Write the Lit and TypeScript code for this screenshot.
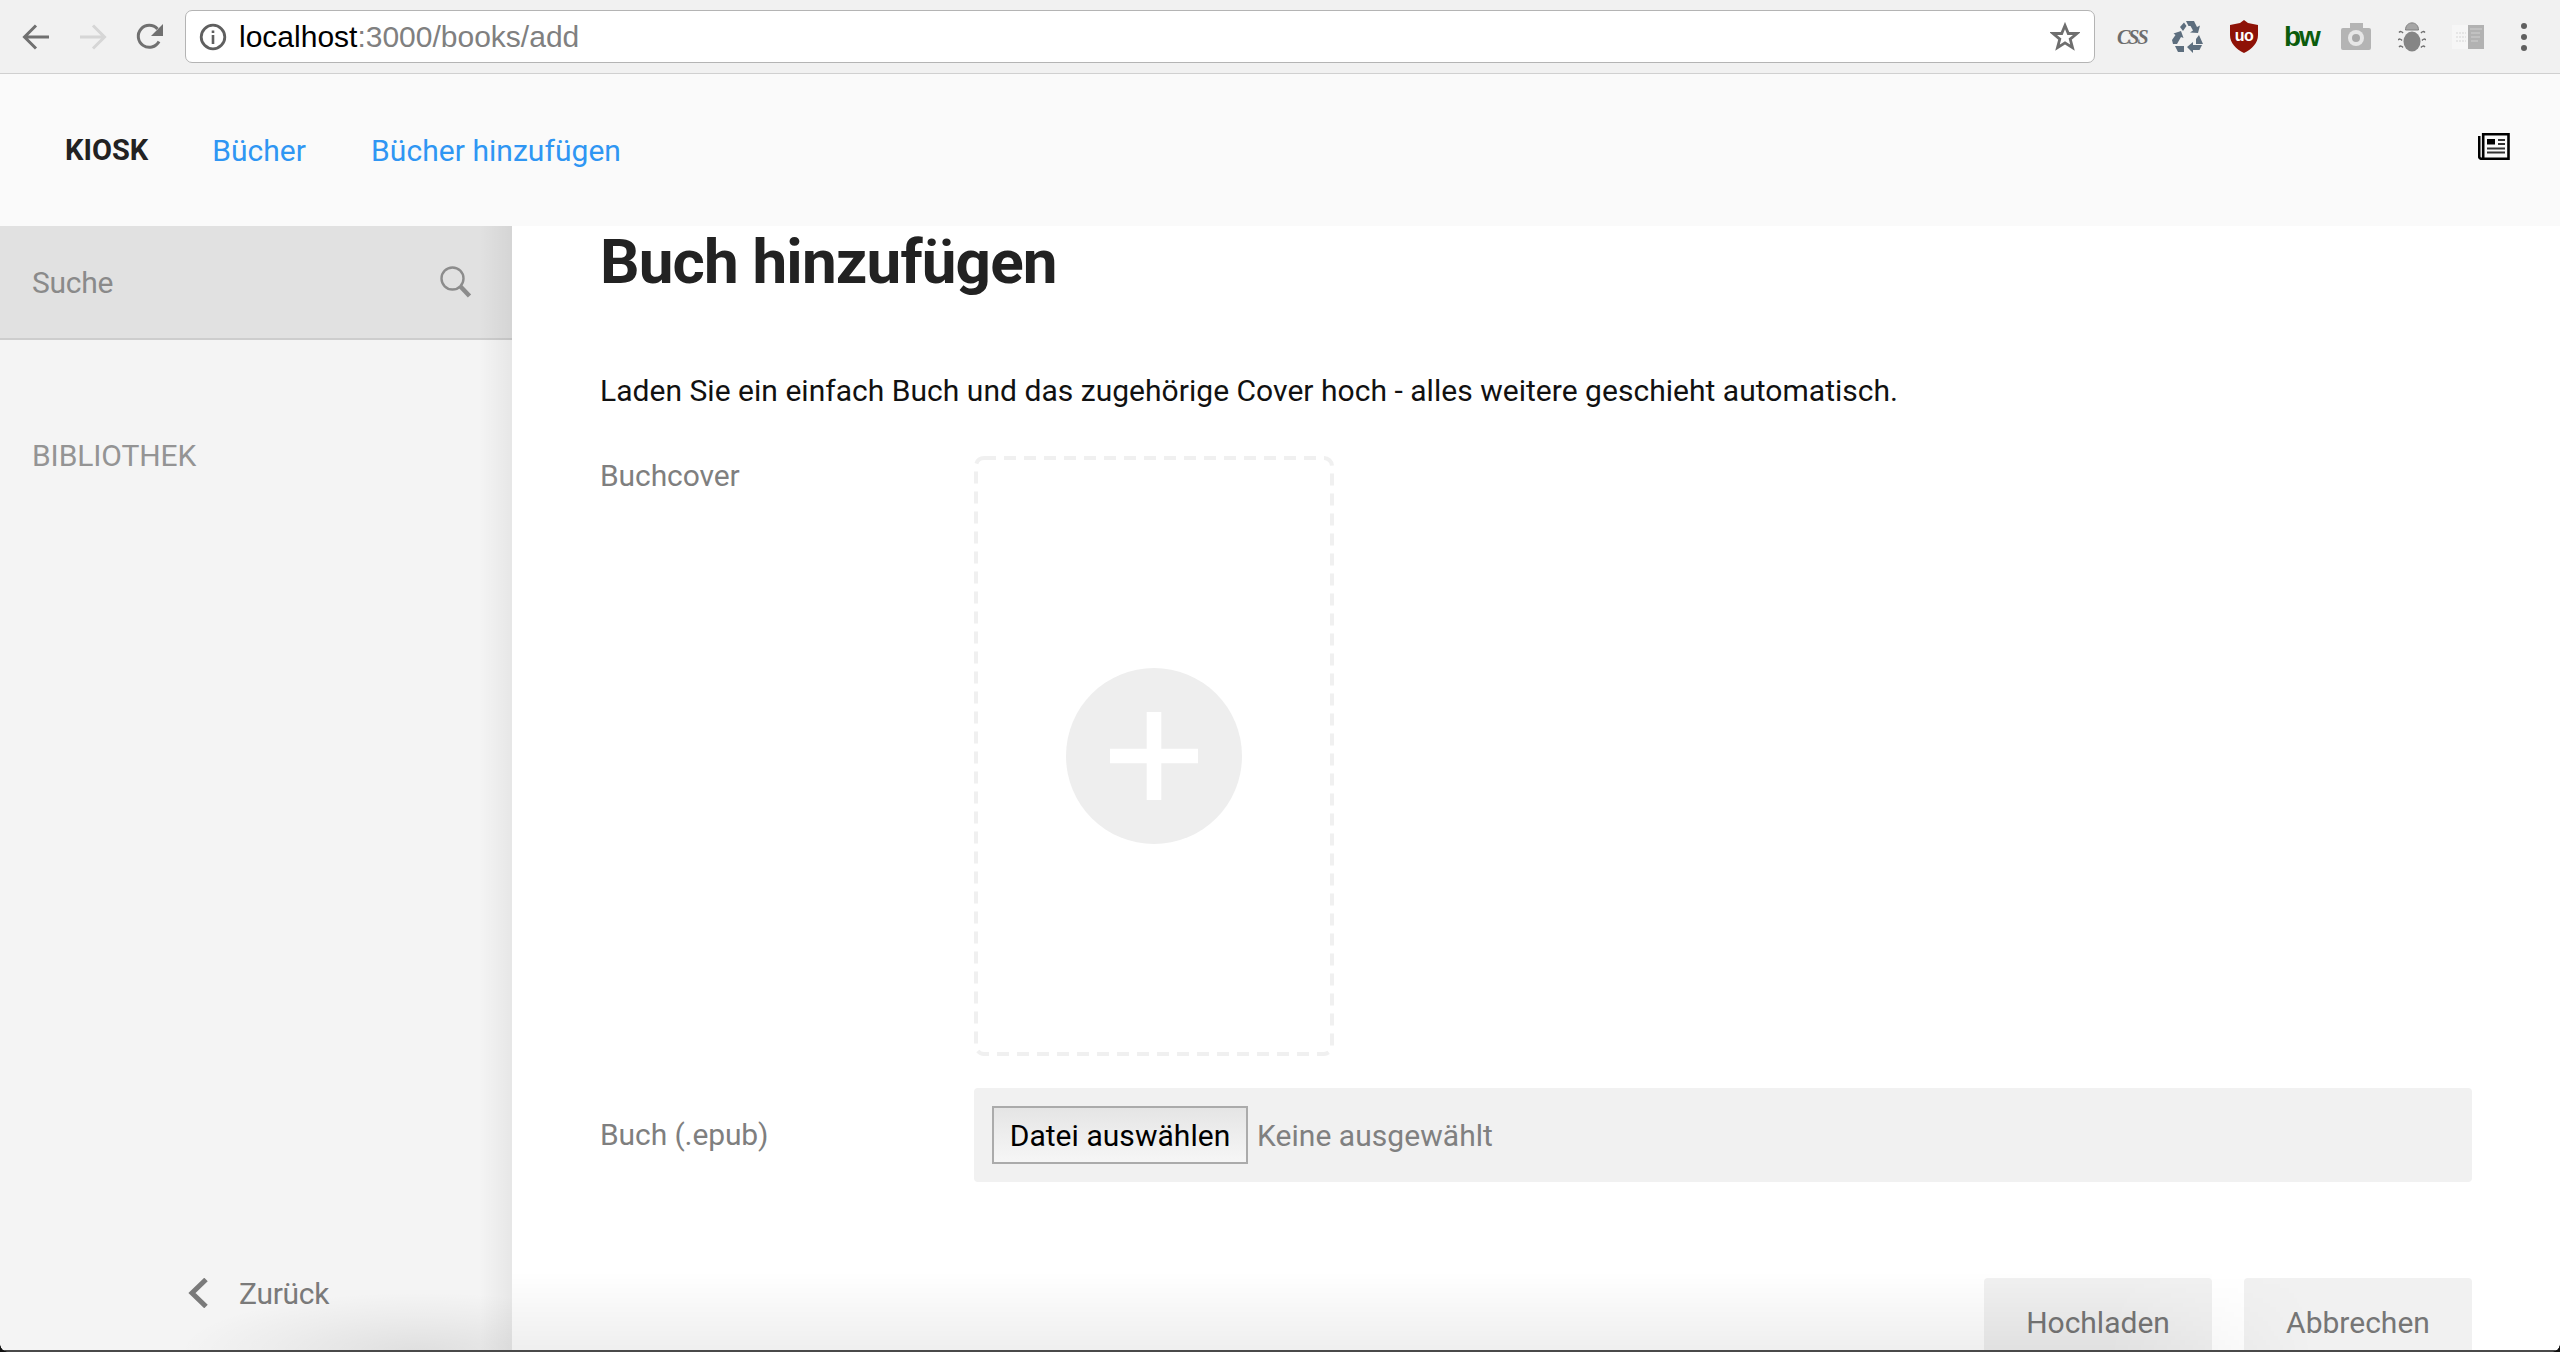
import { LitElement, html, css } from "lit";
import { customElement } from "lit/decorators.js";

@customElement("browser-bar")
class BrowserBar extends LitElement {
  static styles = css`
    :host { display: flex; align-items: center; height: 73px; background: #f1f1f1; border-bottom: 1px solid #d0d0d0; }
    svg { display: block; flex: none; }
    .nav { display: flex; align-items: center; padding-left: 22px; width: 185px; box-sizing: border-box; flex: none; }
    .nav svg { margin-right: 29px; }
    .url { display: flex; align-items: center; width: 1910px; flex: none; height: 53px; box-sizing: border-box; background: #fff; border: 1px solid #b4b4b4; border-radius: 7px; padding: 0 14px 0 13px; }
    .addr { flex: 1; margin-left: 12px; font: 30px/1 "Liberation Sans", sans-serif; color: #000; white-space: nowrap; }
    .addr span { color: #808080; }
    .ext { flex: 1; height: 73px; display: flex; align-items: center; padding-left: 22px; }
    .ext > * { flex: none; }
    .css { width: 30px; font: italic bold 20px/1 "Liberation Serif", serif; color: #6d6d6d; margin-right: 25px; letter-spacing: -2px; white-space: nowrap; }
    .bw { width: 32px; font: bold 28px/20px "Liberation Sans", sans-serif; color: #0c5c0c; letter-spacing: -2px; }
    .m { margin-right: 27px; }
    .m2 { margin-right: 26px; }
    .m3 { margin-right: 25px; }
    .dots { margin-left: 37px; }
  `;
  render() {
    return html`
      <div class="nav">
        <svg width="28" height="26" viewBox="0 0 28 26" fill="none" stroke="#707070" stroke-width="3"><path d="M27 13H4M14 1.500 2.500 13 14 24.500"/></svg>
        <svg width="28" height="26" viewBox="0 0 28 26" fill="none" stroke="#d6d6d6" stroke-width="3"><path d="M1 13h23M14 1.500 25.500 13 14 24.500"/></svg>
        <svg width="28" height="28" viewBox="0 0 28 28" fill="none"><path d="M23 18.500A11 11 0 1 1 21.500 6" stroke="#707070" stroke-width="3"/><path d="M27 1v12H15z" fill="#707070"/></svg>
      </div>
      <div class="url">
        <svg width="28" height="28" viewBox="0 0 28 28" fill="none"><circle cx="14" cy="14" r="11.800" stroke="#5f5f5f" stroke-width="2.800"/><path d="M12.700 12h2.600v9h-2.600zM12.700 7.500h2.600v2.600h-2.600z" fill="#5f5f5f"/></svg>
        <div class="addr">localhost<span>:3000/books/add</span></div>
        <svg width="30" height="30" viewBox="0 0 30 30" fill="none"><path d="M15 3.500l3.300 8h8.700l-6.800 5.600 2.300 8.600L15 20.800l-7.500 4.900 2.300-8.600L3 11.500h8.700z" stroke="#6e6e6e" stroke-width="2.800"/></svg>
      </div>
      <div class="ext">
        <div class="css">CSS</div>
        <svg class="m" width="31" height="32" viewBox="0 0 31 32" fill="#5d6e7e"><path d="M8 6l4-4.500L14.500 5 11 10zM14 0h8l3 6 3-1.500L26 12l-8-.5 3-2L18.500 5h-2zM1 23l-1-4 3.500-5-2-1.500L9 10l2.500 7L9 16l-4 7zM3 25h9v6H6zM24 18l3-4 4 9h-7zM15 26l6-5v3h9l-2.500 5H21v3z"/></svg>
        <svg class="m2" width="28" height="33" viewBox="0 0 28 33"><path d="M14 0l4 3 10 2v10c0 8-6 14-14 18C6 29 0 23 0 15V5l10-2z" fill="#8e1207"/><text x="14" y="20.500" text-anchor="middle" font-family="Liberation Sans" font-weight="bold" font-size="16" letter-spacing="-.5" fill="#fff">uo</text></svg>
        <div class="bw m3">bw</div>
        <svg class="m" width="30" height="27" viewBox="0 0 30 27"><path d="M9 0h13v5h6a2 2 0 0 1 2 2v18a2 2 0 0 1-2 2H2a2 2 0 0 1-2-2V7a2 2 0 0 1 2-2h7z" fill="#b4b4b4"/><circle cx="15" cy="15" r="8" fill="#e6e6e6"/><circle cx="15" cy="15" r="4" fill="#a8a8a8"/></svg>
        <svg class="m2" width="28" height="30" viewBox="0 0 28 30" fill="none"><path d="M7.500 8C7.500-1.500 20.500-1.500 20.500 8z" fill="#a6a6a6" stroke="#808080"/><ellipse cx="14" cy="19.500" rx="8.500" ry="10" fill="#858585"/><path d="M1 10.500q2-2 4 .5M27 10.500q-2-2-4 .5M0 18q2-2 4 .5M28 18q-2-2-4 .5M1 25q2-2 4 .5M27 25q-2-2-4 .5" stroke="#6e6e6e" stroke-width="1.500"/></svg>
        <svg width="32" height="24" viewBox="0 0 32 24"><rect width="16" height="24" fill="#f6f6f6"/><rect x="16" width="16" height="24" fill="#b2b2b2"/><path d="M4 8h10M4 12h10M4 16h10" stroke="#e6e6e6" stroke-width="2" stroke-dasharray="2 1"/><path d="M18 4h12M19 8h9M19 12h9M19 16h7" stroke="#c6c6c6" stroke-width="1.500"/></svg>
        <svg class="dots" width="6" height="28" viewBox="0 0 6 28" fill="#606060"><circle cx="3" cy="3" r="3"/><circle cx="3" cy="14" r="3"/><circle cx="3" cy="25" r="3"/></svg>
      </div>
    `;
  }
}

@customElement("app-root")
export class AppRoot extends LitElement {
  static styles = css`
    :host { display: flex; flex-direction: column; position: relative; height: 1352px; overflow: hidden; background: #fff; font-family: Roboto, sans-serif; color: #222; }
    .top { display: flex; align-items: center; flex: none; height: 152px; background: #fafafa; box-sizing: border-box; padding: 0 50px 0 65px; font-size: 30px; }
    .brand { font-weight: 700; color: #222; margin-right: 64px; font-size: 29px; }
    .link { color: #2f96f3; margin-right: 65px; letter-spacing: 0.05px; }
    .news { margin-left: auto; margin-bottom: 8px; display: block; }
    .body { flex: 1; display: flex; min-height: 0; }
    .side { position: relative; width: 512px; flex: none; display: flex; flex-direction: column; background: #f4f4f4; overflow: hidden; }
    .search { height: 112px; border-bottom: 2px solid #cdcdcd; background: #e1e1e1; display: flex; align-items: center; justify-content: space-between; padding: 0 40px 0 32px; font-size: 30px; letter-spacing: -0.3px; color: #8a8a8a; }
    .lib { margin: 98px 0 0 32px; line-height: 36px; font-size: 30px; letter-spacing: -0.1px; color: #949494; }
    .back { margin-top: auto; margin-bottom: 41px; padding-left: 188px; display: flex; align-items: center; gap: 31px; height: 36px; font-size: 30px; letter-spacing: -0.3px; color: #7a7a7a; }
    .edge { position: absolute; top: 0; bottom: 0; right: 0; width: 32px; background: linear-gradient(to right, rgba(0,0,0,0), rgba(0,0,0,0.055)); }
    .blob { position: absolute; left: 180px; right: 0; bottom: 0; height: 80px; background: radial-gradient(ellipse 240px 60px at 72% 100%, rgba(0,0,0,0.085), rgba(0,0,0,0.03) 60%, rgba(0,0,0,0)); }
    .main { position: relative; flex: 1; min-width: 0; overflow: hidden; padding: 0 88px; box-sizing: border-box; }
    h1 { margin: 0; font-size: 62px; line-height: 72px; font-weight: 700; letter-spacing: -0.85px; color: #222; }
    p { margin: 73px 0 0; font-size: 30px; line-height: 40px; letter-spacing: 0.03px; color: #111; }
    .row { display: flex; }
    .row.cover { margin-top: 45px; }
    .row.file { margin-top: 32px; align-items: center; }
    .label { flex: none; width: 374px; font-size: 30px; letter-spacing: -0.1px; color: #7f7f7f; line-height: 38px; }
    .cover .label { margin-top: 1px; }
    .drop { display: block; flex: none; }
    .picker { flex: 1; height: 94px; background: #f1f1f1; border-radius: 4px; display: flex; align-items: center; padding-left: 18px; gap: 9px; font-size: 30px; letter-spacing: 0.05px; color: #808080; }
    .pick { box-sizing: border-box; width: 256px; height: 58px; display: flex; align-items: center; justify-content: center; border: 2px solid #ababab; background: linear-gradient(#e5e5e5, #f6f6f6); color: #000; }
    .actions { display: flex; justify-content: flex-end; gap: 32px; margin-top: 96px; }
    .btn { width: 228px; height: 88px; background: #f1f1f1; border-radius: 4px; display: flex; align-items: center; justify-content: center; font-size: 30px; color: #767676; }
    .fade { position: absolute; left: 0; right: 0; bottom: 0; height: 80px; background: linear-gradient(rgba(0,0,0,0), rgba(0,0,0,0.065)); -webkit-mask-image: linear-gradient(to right, #000 78%, transparent 88%); mask-image: linear-gradient(to right, #000 78%, transparent 88%); pointer-events: none; }
    .frame { position: absolute; left: 0; right: 0; bottom: 0; height: 2px; background: #4a4a4a; }
    .corner { position: absolute; bottom: 0; width: 8px; height: 8px; }
    .corner.l { left: 0; background: radial-gradient(circle at 100% 0, transparent 7.500px, #111 8px); }
    .corner.r { right: 0; background: radial-gradient(circle at 0 0, transparent 7.500px, #111 8px); }
  `;
  render() {
    return html`
      <browser-bar></browser-bar>
      <header class="top">
        <span class="brand">KIOSK</span>
        <span class="link">Bücher</span>
        <span class="link">Bücher hinzufügen</span>
        <svg class="news" width="32" height="27" viewBox="0 0 32 27" fill="none"><path d="M1.200 3v20.500q0 2.300 2.300 2.300H30.500V1.300H5.200v24" stroke="#000" stroke-width="2.600"/><rect x="9" y="6" width="8" height="5.500" fill="#000"/><path d="M20 7h7M20 11h7M9 15.500h18M9 19.500h18" stroke="#333" stroke-width="1.800"/></svg>
      </header>
      <div class="body">
        <aside class="side">
          <div class="search">
            <span>Suche</span>
            <svg width="32" height="32" viewBox="0 0 32 32" fill="none"><circle cx="12.500" cy="12.500" r="11" stroke="#8c8c8c" stroke-width="2.400"/><path d="M20.500 20.500 29.500 30" stroke="#8c8c8c" stroke-width="4.500"/></svg>
          </div>
          <div class="lib">BIBLIOTHEK</div>
          <div class="back">
            <svg width="20" height="30" viewBox="0 0 20 30" fill="none"><path d="M18 1.500 4 15l14 13.500" stroke="#7a7a7a" stroke-width="5"/></svg>
            <span>Zurück</span>
          </div>
          <div class="edge"></div>
          <div class="blob"></div>
        </aside>
        <main class="main">
          <h1>Buch hinzufügen</h1>
          <p>Laden Sie ein einfach Buch und das zugehörige Cover hoch - alles weitere geschieht automatisch.</p>
          <div class="row cover">
            <div class="label">Buchcover</div>
            <svg class="drop" width="360" height="600" viewBox="0 0 360 600" fill="none">
              <rect x="2" y="2" width="356" height="596" rx="8" stroke="#f0f0f0" stroke-width="4" stroke-dasharray="12 8"/>
              <circle cx="180" cy="300" r="88" fill="#eee"/>
              <path d="M172.700 256h14.600v36.700H224v14.600h-36.700V344h-14.600v-36.700H136v-14.600h36.700z" fill="#fff"/>
            </svg>
          </div>
          <div class="row file">
            <div class="label">Buch (.epub)</div>
            <div class="picker"><div class="pick">Datei auswählen</div><span>Keine ausgewählt</span></div>
          </div>
          <div class="actions">
            <div class="btn">Hochladen</div>
            <div class="btn">Abbrechen</div>
          </div>
          <div class="fade"></div>
        </main>
      </div>
      <div class="frame"></div>
      <div class="corner l"></div>
      <div class="corner r"></div>
    `;
  }
}
